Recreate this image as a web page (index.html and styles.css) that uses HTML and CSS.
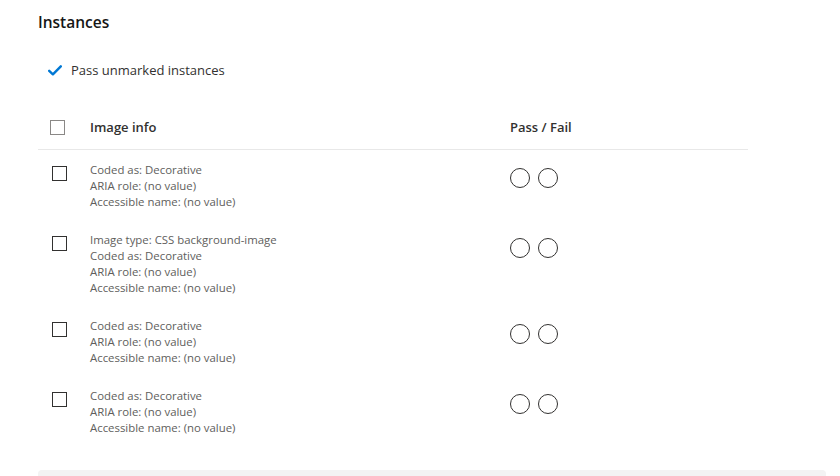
FILE: index.html
```html
<!DOCTYPE html>
<html>
<head>
<meta charset="utf-8">
<link rel="stylesheet" href="styles.css">
</head>
<body>
<div class="page">
  <h2 class="title">Instances</h2>
  <div class="pass-unmarked">
    <svg class="check-icon" width="14" height="11" viewBox="0 0 14 11"><path d="M1.2 5.8 L4.9 9.3 L12.8 1.3" fill="none" stroke="#0078d4" stroke-width="2.4" stroke-linecap="round" stroke-linejoin="round"/></svg>
    <span>Pass unmarked instances</span>
  </div>
  <div class="table">
    <div class="row header">
      <div class="cell-check"><span class="box box-header"></span></div>
      <div class="cell-info">Image info</div>
      <div class="cell-pf">Pass / Fail</div>
    </div>
    <div class="row item">
      <div class="cell-check"><span class="box"></span></div>
      <div class="cell-info details">
        <div>Coded as: Decorative</div>
        <div>ARIA role: (no value)</div>
        <div>Accessible name: (no value)</div>
      </div>
      <div class="cell-pf"><span class="radio"></span><span class="radio"></span></div>
    </div>
    <div class="row item">
      <div class="cell-check"><span class="box"></span></div>
      <div class="cell-info details">
        <div>Image type: CSS background-image</div>
        <div>Coded as: Decorative</div>
        <div>ARIA role: (no value)</div>
        <div>Accessible name: (no value)</div>
      </div>
      <div class="cell-pf"><span class="radio"></span><span class="radio"></span></div>
    </div>
    <div class="row item">
      <div class="cell-check"><span class="box"></span></div>
      <div class="cell-info details">
        <div>Coded as: Decorative</div>
        <div>ARIA role: (no value)</div>
        <div>Accessible name: (no value)</div>
      </div>
      <div class="cell-pf"><span class="radio"></span><span class="radio"></span></div>
    </div>
    <div class="row item">
      <div class="cell-check"><span class="box"></span></div>
      <div class="cell-info details">
        <div>Coded as: Decorative</div>
        <div>ARIA role: (no value)</div>
        <div>Accessible name: (no value)</div>
      </div>
      <div class="cell-pf"><span class="radio"></span><span class="radio"></span></div>
    </div>
  </div>
  <div class="footer-box"></div>
</div>
</body>
</html>
```
FILE: styles.css
```css
html, body {
  margin: 0;
  padding: 0;
  background: #ffffff;
}
body {
  font-family: "Open Sans", "Noto Sans", "Liberation Sans", sans-serif;
  color: #323130;
  overflow: hidden;
}
.page {
  padding: 11px 14px 0 38px;
}
.title {
  margin: 0;
  font-size: 15.5px;
  line-height: 22px;
  font-weight: 600;
  color: #161616;
}
.pass-unmarked {
  display: flex;
  align-items: center;
  gap: 9px;
  margin-top: 26px;
  padding-left: 10px;
  height: 22px;
  font-size: 13px;
  color: #323130;
}
.check-icon {
  display: block;
  margin-top: 1px;
}
.table {
  width: 710px;
  margin-top: 24px;
}
.row {
  display: grid;
  grid-template-columns: 52px 420px 1fr;
}
.header {
  height: 44px;
  align-items: center;
  border-bottom: 1px solid #e8e8e8;
  font-size: 13px;
  font-weight: 600;
  color: #323130;
}
.header .cell-check {
  padding-left: 12px;
  display: flex;
  align-items: center;
}
.item {
  padding: 12px 0 10px;
}
.item .cell-check {
  padding-left: 14px;
  padding-top: 4px;
}
.box {
  display: block;
  width: 13px;
  height: 13px;
  border: 1px solid #323130;
  box-sizing: content-box;
}
.box-header {
  border-color: #8a8886;
}
.details {
  font-size: 11.4px;
  line-height: 16px;
  color: #605e5c;
}
.item .cell-pf {
  display: flex;
  gap: 8px;
  padding-top: 6px;
}
.radio {
  display: block;
  width: 18px;
  height: 18px;
  border: 1px solid #323130;
  border-radius: 50%;
}
.footer-box {
  margin-top: 24px;
  width: 788px;
  height: 6px;
  background: #f3f3f3;
  border-radius: 4px 4px 0 0;
}
```
